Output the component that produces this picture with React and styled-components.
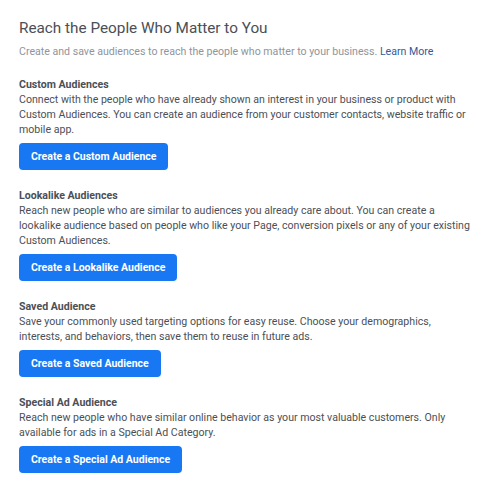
import React from 'react';
import styled, { createGlobalStyle } from 'styled-components';

const GlobalStyle = createGlobalStyle`
  body {
    margin: 0;
    background: #fff;
    font-family: Roboto, "Liberation Sans", Arial, sans-serif;
  }
`;

const sections = [
  {
    title: 'Custom Audiences',
    text: 'Connect with the people who have already shown an interest in your business or product with Custom Audiences. You can create an audience from your customer contacts, website traffic or mobile app.',
    button: 'Create a Custom Audience',
  },
  {
    title: 'Lookalike Audiences',
    text: 'Reach new people who are similar to audiences you already care about. You can create a lookalike audience based on people who like your Page, conversion pixels or any of your existing Custom Audiences.',
    button: 'Create a Lookalike Audience',
  },
  {
    title: 'Saved Audience',
    text: 'Save your commonly used targeting options for easy reuse. Choose your demographics, interests, and behaviors, then save them to reuse in future ads.',
    button: 'Create a Saved Audience',
  },
  {
    title: 'Special Ad Audience',
    text: 'Reach new people who have similar online behavior as your most valuable customers. Only available for ads in a Special Ad Category.',
    button: 'Create a Special Ad Audience',
  },
];

const App = () => (
  <>
    <GlobalStyle />
    <StPage>
      <StHeading>Reach the People Who Matter to You</StHeading>
      <StIntro>
        Create and save audiences to reach the people who matter to your business.{' '}
        <StLink href="#">Learn More</StLink>
      </StIntro>
      {sections.map(s => (
        <StSection key={s.title}>
          <StTitle>{s.title}</StTitle>
          <StText>{s.text}</StText>
          <StButton>{s.button}</StButton>
        </StSection>
      ))}
    </StPage>
  </>
);

export default App;

const StPage = styled.div`
  padding: 17px 19px 20px;
  width: 452px;
`;

const StHeading = styled.h1`
  margin: 0;
  font-size: 15.3px;
  line-height: 22px;
  font-weight: 400;
  color: #4b4f56;
`;

const StIntro = styled.p`
  margin: 4.5px 0 18px;
  font-size: 10.6px;
  line-height: 15px;
  color: #90949c;
`;

const StLink = styled.a`
  color: #365899;
  text-decoration: none;
`;

const StSection = styled.div`
  display: flex;
  flex-direction: column;
  align-items: flex-start;
  margin-bottom: 17.5px;
`;

const StTitle = styled.div`
  font-size: 10.6px;
  line-height: 15px;
  font-weight: 700;
  color: #4b4f56;
`;

const StText = styled.p`
  margin: 0 0 6.5px;
  font-size: 10.6px;
  line-height: 15px;
  color: #4b4f56;
`;

const StButton = styled.button`
  height: 27px;
  padding: 0 12px;
  border: 0;
  border-radius: 4px;
  background: #1877f2;
  color: #fff;
  font-family: inherit;
  font-size: 10.5px;
  font-weight: 700;
  cursor: pointer;
`;
